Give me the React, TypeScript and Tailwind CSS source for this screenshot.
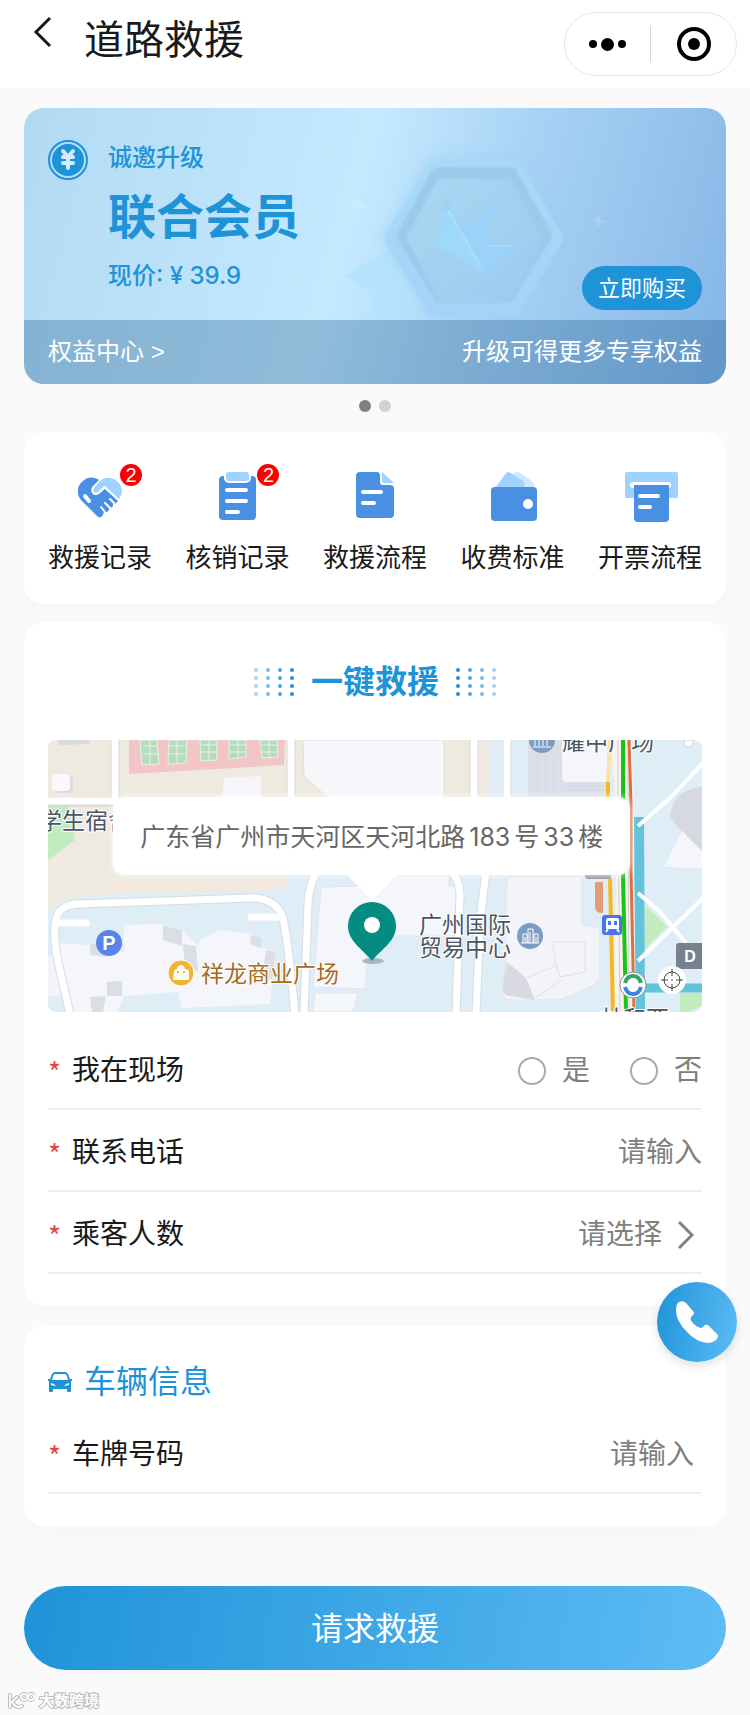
import React, { useState } from 'react';

const shortcuts = [
  { key: 'rescue', label: '救援记录', badge: 2 },
  { key: 'verify', label: '核销记录', badge: 2 },
  { key: 'process', label: '救援流程', badge: 0 },
  { key: 'fee', label: '收费标准', badge: 0 },
  { key: 'invoice', label: '开票流程', badge: 0 },
];

const ShortcutIcon: React.FC<{ name: string }> = ({ name }) => {
  return (
    <svg viewBox="0 0 64 56" className="h-14 w-16" fill="none" strokeLinecap="round" aria-hidden="true">
      {name === 'rescue' && (
        <>
          <path
            d="M13 32C8 26 9 17 15 13C20 8 27 9 31 12L25 18C22 21 23 27 28 27C31 27 34 23 37 21L50 33L48 35C47 36 46 36 45 35L45 38C44 40 42 40 41 39L41 42C39 45 37 45 36 43L35 47C33 50 31 50 29 48Z"
            fill="#4a90e2"
          />
          <path
            d="M32 13C38 8 45 9 50 14C55 19 55 26 51 31L39 20C38 18 36 18 35 19L30 24C27 26 24 23 26 20Z"
            fill="#9fd2ff"
          />
          <path d="M17 28L21 33" stroke="#fff" strokeWidth="4" />
          <path d="M42 31L46 35M37 35L42 40M33 39L37 44" stroke="#fff" strokeWidth="2" />
        </>
      )}
      {name === 'verify' && (
        <>
          <rect x="14" y="8" width="37" height="44" rx="4" fill="#4a90e2" />
          <rect x="20" y="3" width="25" height="11" rx="4" fill="#9fd2ff" stroke="#fff" strokeWidth="2" />
          <path d="M22 22H41M22 33H41M22 44H33" stroke="#fff" strokeWidth="4" />
        </>
      )}
      {name === 'process' && (
        <>
          <path d="M17 4H34Q37 4 37 8V14Q37 17 40 17H47Q51 17 51 21V46Q51 50 47 50H17Q13 50 13 46V8Q13 4 17 4Z" fill="#4a90e2" />
          <path d="M39 4L51 15H41Q39 15 39 13Z" fill="#9fd2ff" />
          <path d="M20 24H38M20 35H31" stroke="#fff" strokeWidth="4" />
        </>
      )}
      {name === 'fee' && (
        <>
          <path d="M30 8L36 4Q38 3 40 5L52 13Q54 15 54 19H40Z" fill="#cfe8ff" />
          <path d="M16 19L26 5Q28 3 31 5L43 13Q45 15 44 19Z" fill="#9fd2ff" />
          <rect x="11" y="19" width="46" height="34" rx="4" fill="#4a90e2" />
          <circle cx="48" cy="36" r="5" fill="#fff" />
        </>
      )}
      {name === 'invoice' && (
        <>
          <rect x="7" y="4" width="53" height="26" rx="2" fill="#9fd2ff" />
          <rect x="12" y="14" width="41" height="6" rx="3" fill="#fff" />
          <path d="M16 17H51V50Q51 54 47 54H20Q16 54 16 50Z" fill="#4a90e2" />
          <path d="M22 28H40M22 39H32" stroke="#fff" strokeWidth="4" />
        </>
      )}
    </svg>
  );
};

// faded medal and crown behind the membership text
const BannerArt = () => (
  <svg viewBox="0 0 702 276" preserveAspectRatio="xMidYMid slice" className="absolute inset-0 h-full w-full" aria-hidden="true">
    <defs>
      <linearGradient id="hexOuter" x1="0" y1="0" x2="0" y2="1">
        <stop offset="0" stopColor="#a8daf6" />
        <stop offset="1" stopColor="#a3d3fa" />
      </linearGradient>
      <linearGradient id="hexInner" x1="0" y1="0" x2="1" y2="1">
        <stop offset="0" stopColor="#a8d8f1" />
        <stop offset="1" stopColor="#9ccaf0" />
      </linearGradient>
      <linearGradient id="star" x1="0" y1="0" x2="1" y2="1">
        <stop offset="0" stopColor="#b2e0fd" />
        <stop offset="1" stopColor="#b4e4fc" stopOpacity="0.3" />
      </linearGradient>
      <filter id="soft" x="-20%" y="-20%" width="140%" height="140%">
        <feGaussianBlur stdDeviation="6" />
      </filter>
      <filter id="edge" x="-10%" y="-10%" width="120%" height="120%">
        <feGaussianBlur stdDeviation="1" />
      </filter>
    </defs>
    <path d="M321 167L352 150L368 138L400 196L346 214L350 186Z" fill="url(#star)" filter="url(#edge)" />
    <path d="M334 88L337 95L344 99L337 101L334 107L331 100L325 96L331 95Z" fill="#cbecff" opacity="0.6" />
    <path d="M575 106L577 112L583 113L577 115L574 120L573 115L568 112L573 111Z" fill="#b3d3f4" opacity="0.6" />
    <g strokeLinejoin="round">
      <path d="M412 60H488L530 130L488 200H412L370 130Z" stroke="#93cff5" strokeWidth="22" fill="#93cff5" filter="url(#soft)" opacity="0.4" />
      <path d="M412 62H488L529 130L488 198H412L371 130Z" fill="url(#hexOuter)" stroke="url(#hexOuter)" strokeWidth="20" filter="url(#edge)" />
      <path d="M415 68H485L519 128L483 185H417L382 128Z" fill="#9bcbec" stroke="#9bcbec" strokeWidth="18" filter="url(#edge)" />
      <path d="M417 77H483L511 130L480 189H420L389 130Z" fill="url(#hexInner)" stroke="url(#hexInner)" strokeWidth="12" filter="url(#edge)" />
    </g>
    <g fill="#9ad2fa">
      <path d="M422 100L448 144L461 166L414 138Z" fill="#9dd9f9" />
      <path d="M436 124L465 102L462 138L490 141L461 166L448 144Z" />
      <path d="M424 102L456 157" stroke="#abdefc" strokeWidth="2" />
      <path d="M462 138H490" stroke="#a7d8fa" strokeWidth="2" />
      <circle cx="422" cy="98" r="5" />
      <circle cx="465" cy="101" r="5" />
      <circle cx="492" cy="137" r="4" />
    </g>
  </svg>
);

const DotGrid: React.FC<{ flip?: boolean }> = ({ flip }) => {
  const shades = ['#a9d3ef', '#7cbce7', '#4fa6de', '#1f93d8'];
  const cols = flip ? [...shades].reverse() : shades;
  return (
    <svg viewBox="0 0 42 30" className="h-[30px] w-[42px]" aria-hidden="true">
      {cols.map((fill, c) =>
        [0, 1, 2, 3].map((r) => <circle key={`${c}-${r}`} cx={3 + c * 12} cy={3 + r * 8} r="2" fill={fill} />)
      )}
    </svg>
  );
};

const MapDrawing = () => (
  <svg
    viewBox="0 0 654 272"
    preserveAspectRatio="xMidYMid slice"
    className="absolute inset-0 h-full w-full font-['Liberation_Sans','Noto_Sans_CJK_SC',sans-serif]"
    aria-hidden="true"
  >
    <rect width="654" height="272" fill="#dfedf6" />
    {/* campus */}
    <path d="M0 0H441V57H239V147L210 152L60 154L15 160L0 172Z" fill="#eeeae0" />
    <path d="M60 140H239V147L60 153Z" fill="#f3e9e0" />
    <path d="M0 65H20L27 100L0 120Z" fill="#c1ecbd" />
    <path d="M81 0H237L236 25L81 34Z" fill="#f2c6c8" />
    <g fill="#b5dcbb" stroke="#e7f3e3" strokeWidth="1">
      <path d="M92 0H109L111 24L94 25Z" />
      <path d="M121 0H139L138 23L120 24Z" />
      <path d="M152 0H169L169 20L153 21Z" />
      <path d="M181 0H198L198 17L181 19Z" />
      <path d="M212 0H229L230 17L214 18Z" />
    </g>
    <path d="M94 6H110M94 14H110M102 0V24M121 6H138M121 14H138M129 0V23M153 5H169M153 12H169M161 0V20M181 5H198M181 12H198M190 0V18M213 5H230M213 12H230M221 0V17" stroke="#e7f3e3" />
    <path d="M9 0H41V4L12 5Z" fill="#dadbdc" />
    <rect x="6" y="36" width="19" height="17" rx="4" fill="#dcdcdf" />
    <rect x="4" y="34" width="18" height="17" rx="4" fill="#f9f9fc" />
    <path d="M176 38L213 36V58H174Z" fill="#f6f6fa" />
    <path d="M255 0H396V58H280L256 36Z" fill="#f7f7fb" stroke="#e0e0e4" />
    <path d="M67 0V58M0 62H68M243 0V58M426 0V58" stroke="#d9d8d4" strokeWidth="9" />
    <path d="M67 0V60M0 61H68M243 0V58M426 0V58" stroke="#fff" strokeWidth="7" />
    {/* buildings, lower left */}
    <path d="M10 203L42 205V212H76V185L115 184L134 190L150 206L152 200L170 190L205 194L213 207L228 212L222 264L134 268L130 252L76 256L70 272H20Z" fill="#f5f6fb" />
    <path d="M115 185L134 190V206L115 200Z M135 204L148 206L150 232L137 226Z M203 195L213 198V208L202 204Z M218 210L228 212L224 240L214 236Z M43 203L57 207V217L42 215Z M59 242L74 241V256H59Z M42 257L58 256L55 272H44Z" fill="#dcdee6" />
    <path d="M0 217L12 217V256H0Z" fill="#f3f4f9" />
    {/* buildings, centre */}
    <path d="M273 147L318 146V136H401V146H408V196H318V240L317 249L265 247Z" fill="#f5f6fb" stroke="#e3e5ec" />
    <path d="M267 253H310L305 272H265Z" fill="#f5f6fb" stroke="#e3e5ec" />
    <path d="M480 0H562V57H480Z" fill="#dcdfe8" />
    <path d="M490 10V52M498 14V54M506 16V54M516 46H556M520 50H556" stroke="#d2d5df" />
    <path d="M514 0H563V38Q563 42 559 42H518Q514 42 514 38Z" fill="#f5f6fb" />
    <path d="M462 137H534V184L552 188V238L545 246L512 260H462Q454 260 455 250L458 218V150Q458 140 462 137Z" fill="#f3f4fa" stroke="#e0e2ea" />
    <path d="M459 222L478 238L487 260L462 256Q455 256 455 248Z" fill="#d9dae1" />
    <path d="M478 238L510 225M487 258L514 240M504 202H537V232L512 237L508 225Z" stroke="#dfe1e9" fill="none" />
    {/* side roads */}
    <g fill="none" stroke="#d7dde4" strokeWidth="9">
      <path d="M22 274L10 222Q4 190 9 176Q13 165 30 164L203 158Q228 158 235 178Q240 200 247 274" />
      <path d="M268 132Q260 150 260 165L256 274M404 132Q412 142 412 155L408 274M438 132L432 180L428 274M459 0V58" />
    </g>
    <g fill="none" stroke="#fff" strokeWidth="7" strokeLinecap="round">
      <path d="M22 274L10 222Q4 190 9 176Q13 165 30 164L203 158Q228 158 235 178Q240 200 247 274" />
      <path d="M9 183H38M203 177H234" />
      <path d="M268 132Q260 150 260 165L256 274M404 132Q412 142 412 155L408 274M438 132L432 180L428 274M459 0V58" />
    </g>
    {/* right block */}
    <path d="M622 77Q624 58 638 51L654 46V113L634 92Z" fill="#d6d8e2" />
    <path d="M616 127L634 91L654 111V128Z" fill="#f5f6fb" />
    <path d="M597 165L619 187L597 209Z" fill="#c1ecbd" />
    <path d="M632 253H654V266L640 272H632Z" fill="#c1ecbd" />
    <path d="M636 0H645V5Q640 9 636 4Z" fill="#fff" stroke="#cdd5dc" />
    <path d="M586 77H596L597 272H587Z" fill="#63c3da" />
    <path d="M596 248H654" stroke="#63c3da" strokeWidth="9" />
    <path d="M590 86L622 58L656 22M590 153L612 172L638 203M590 221L622 190L656 157" fill="none" stroke="#fff" strokeWidth="4" />
    {/* arterial road with traffic colours */}
    <path d="M562 0L568 60V136L566 272H588L586 136V60L583 0Z" fill="#f6f4ec" />
    <path d="M562 0L560 42" stroke="#f6e3b0" strokeWidth="4" />
    <path d="M570 0V60L572 272M580 0V60L581 272" stroke="#cfd0ca" fill="none" />
    <path d="M560 42V58M562 138L565 272" stroke="#f6b820" strokeWidth="4" />
    <path d="M575 0V60L575 136L578 272" stroke="#1cc21c" strokeWidth="4" fill="none" />
    <path d="M581 0L583 64V130L586 272" stroke="#dd6f42" strokeWidth="3" fill="none" />
    <path d="M547 142H555V173Q547 173 547 167Z" fill="#e39b78" />
    <rect x="537" y="130" width="26" height="9" rx="3" fill="#8e979f" />
    {/* markers */}
    <circle cx="61" cy="203" r="13" fill="#5883ea" />
    <text x="61" y="210" textAnchor="middle" fontSize="20" fontWeight="700" fill="#fff">P</text>
    <circle cx="133" cy="233" r="13" fill="#f4b32e" stroke="#fff" />
    <path d="M126 232Q126 229 129 229Q130 225 133 225Q136 225 137 229Q141 229 141 232V240H125Z" fill="#fff" />
    <path d="M130 231V233M136 231V233" stroke="#f4b32e" strokeWidth="2" />
    <g>
      <circle cx="482" cy="196" r="13" fill="#7c9dc1" />
      <path d="M475 203V194H479V203M480 203V189H485V203M486 203V194H490V203M473 203H491" stroke="#fff" strokeWidth="1" fill="none" />
      <path d="M477 197V203M482 192V203M488 197V203" stroke="#fff" />
      <circle cx="494" cy="0" r="13" fill="#7c9dc1" />
      <path d="M487 6V0M491 6V0M495 6V0M499 6V0M485 7H503" stroke="#fff" />
    </g>
    <rect x="554" y="175" width="20" height="20" rx="3" fill="#4676ea" />
    <path d="M560 178H569Q571 178 571 181V189H558V181Q558 178 560 178Z" fill="#fff" />
    <path d="M560 181H563V185H560ZM566 181H569V185H566Z" fill="#4676ea" />
    <path d="M560 189L558 192M569 189L571 192" stroke="#fff" strokeWidth="2" />
    <circle cx="585" cy="245" r="13" fill="#fff" stroke="#8b959c" />
    <path d="M577 243Q579 236 585 236Q591 236 593 243" stroke="#32a861" strokeWidth="4" fill="none" />
    <path d="M577 247Q579 254 585 254Q591 254 593 247" stroke="#3a86dc" strokeWidth="4" fill="none" />
    <rect x="628" y="203" width="28" height="26" rx="3" fill="#77818f" />
    <text x="642" y="222" textAnchor="middle" fontSize="16" fontWeight="700" fill="#fff">D</text>
    {/* place names */}
    <g fontSize="23" fill="#4b5563" stroke="#fff" strokeWidth="2" paintOrder="stroke">
      <text x="-9" y="89">学生宿舍</text>
      <text x="514" y="10">耀中广场</text>
      <text x="371" y="193">广州国际</text>
      <text x="371" y="216">贸易中心</text>
      <text x="552" y="287">林和西</text>
      <text x="153" y="242" fill="#a56c1d">祥龙商业广场</text>
    </g>
    {/* pin */}
    <path d="M298 134H350L324 160Z" fill="#fff" />
    <ellipse cx="325" cy="221" rx="11" ry="3" fill="#7f96a0" opacity="0.6" />
    <path d="M324 221C316 210 300 202 300 186A24 24 0 0 1 348 186C348 202 332 210 324 221Z" fill="#048b82" />
    <circle cx="324" cy="185" r="8" fill="#fff" />
  </svg>
);

const FormRow: React.FC<{ label: string; htmlFor?: string; children: React.ReactNode }> = ({ label, htmlFor, children }) => (
  <div className="flex h-[82px] items-center justify-between border-b-2 border-[#f0f0f0] pt-[6px]">
    <label htmlFor={htmlFor} className="flex shrink-0 items-center text-[28px] leading-10 text-[#1a1a1a]">
      <span className="w-6 font-['Noto_Sans_CJK_SC',sans-serif] text-[#e64545]">*</span>
      {label}
    </label>
    {children}
  </div>
);

export default function App() {
  const [onSite, setOnSite] = useState('');
  const [phone, setPhone] = useState('');
  const [passengers, setPassengers] = useState('');
  const [plate, setPlate] = useState('');

  return (
    <div className="min-h-screen bg-[#fafafa] font-['Liberation_Sans','Noto_Sans_CJK_SC',sans-serif] text-[#1a1a1a]">
      <header className="flex items-start bg-white py-3 pr-[13px] pl-8">
        <button type="button" aria-label="返回" className="flex h-10 w-8 items-center">
          <svg viewBox="0 0 20 32" className="h-8 w-5" fill="none" stroke="#1a1a1a" strokeWidth="3">
            <path d="M18 2L4 16L18 30" />
          </svg>
        </button>
        <h1 className="ml-5 text-[40px] leading-14">道路救援</h1>
        <div className="ml-auto flex h-16 w-[173px] items-center rounded-full border border-[#e6e6e6]">
          <button type="button" aria-label="更多" className="flex flex-1 items-center justify-center gap-1">
            <span className="h-2 w-2 rounded-full bg-black" />
            <span className="h-[13px] w-[13px] rounded-full bg-black" />
            <span className="h-2 w-2 rounded-full bg-black" />
          </button>
          <span className="h-9 w-px bg-[#d4d4d4]" />
          <button type="button" aria-label="关闭" className="flex flex-1 items-center justify-center">
            <span className="flex h-[34px] w-[34px] items-center justify-center rounded-full border-4 border-black">
              <span className="h-3 w-3 rounded-full bg-black" />
            </span>
          </button>
        </div>
      </header>

      <main className="px-6 pt-5">
        <section className="relative overflow-hidden rounded-[20px] bg-[linear-gradient(105deg,#b1daf2_0%,#c5e9ff_46%,#a9d3f5_66%,#84b5e6_100%)]">
          <BannerArt />
          <div className="relative flex items-start px-6 pt-8 pb-[10px] text-[#1f93d8]">
            <svg viewBox="0 0 40 40" className="h-10 w-10" aria-hidden="true">
              <circle cx="20" cy="20" r="19" fill="none" stroke="#1f93d8" strokeWidth="2" />
              <circle cx="20" cy="20" r="16" fill="#1f93d8" />
              <path d="M15 11L20 17L25 11M20 17V28M15 17H25M15 23H25" fill="none" stroke="#d3edfb" strokeWidth="4" strokeLinecap="round" />
            </svg>
            <div className="ml-5 pb-4 font-medium">
              <p className="text-2xl leading-9">诚邀升级</p>
              <p className="mt-[14px] text-5xl leading-14 font-bold">联合会员</p>
              <p className="mt-3 font-['Inter','Noto_Sans_CJK_SC',sans-serif] text-2xl leading-9">现价: ¥ 39.9</p>
            </div>
            <button type="button" className="ml-auto h-11 w-[120px] self-end rounded-full bg-[#1f93d8] text-[22px] text-white">
              立即购买
            </button>
          </div>
          <div className="relative flex h-16 items-center justify-between bg-[rgba(24,83,132,0.3)] px-6 text-2xl text-white">
            <a href="#benefits">权益中心 &gt;</a>
            <span>升级可得更多专享权益</span>
          </div>
        </section>

        <div className="flex justify-center gap-2 py-4">
          <span className="h-3 w-3 rounded-full bg-[#808080]" />
          <span className="h-3 w-3 rounded-full bg-[#d2d2d2]" />
        </div>

        <nav className="mt-1 flex justify-between rounded-[20px] bg-white px-6 pt-9 pb-7 shadow-[0_8px_24px_rgba(0,0,0,0.02)]">
          {shortcuts.map((item) => (
            <button key={item.key} type="button" className="flex flex-col items-center">
              <span className="relative">
                <ShortcutIcon name={item.key} />
                {item.badge > 0 && (
                  <span className="absolute -top-1 -right-[10px] h-[22px] w-[22px] rounded-full bg-[#fe0000] text-center text-xl leading-[22px] text-white">
                    {item.badge}
                  </span>
                )}
              </span>
              <span className="mt-4 text-[26px] leading-9">{item.label}</span>
            </button>
          ))}
        </nav>

        <section className="mt-[18px] rounded-[20px] bg-white px-6 pt-[34px] pb-8 shadow-[0_8px_24px_rgba(0,0,0,0.02)]">
          <div className="flex items-center justify-center gap-4">
            <DotGrid />
            <h2 className="text-[32px] leading-[52px] font-bold text-[#1f93d8]">一键救援</h2>
            <DotGrid flip />
          </div>

          <div className="relative mt-8 h-[272px] overflow-hidden rounded-lg">
            <MapDrawing />
            <div className="absolute top-[57px] right-[11%] left-[10%] flex h-[78px] items-center justify-center rounded-xl bg-white pt-1 font-['Inter','Noto_Sans_CJK_SC',sans-serif] text-[25px] whitespace-nowrap text-[#666] shadow-[0_0_6px_rgba(255,255,255,0.9)]">
              广东省广州市天河区天河北路<span className="mx-1">183</span>号<span className="mx-1">33</span>楼
            </div>
            <button
              type="button"
              aria-label="重新定位"
              className="absolute right-4 bottom-[18px] flex h-7 w-7 items-center justify-center rounded-full bg-white"
            >
              <svg viewBox="0 0 22 22" className="h-[22px] w-[22px]" fill="none" stroke="#444" strokeWidth="1">
                <circle cx="11" cy="11" r="8" />
                <path d="M11 0V7M11 15V22M0 11H7M15 11H22M10 11H12" />
              </svg>
            </button>
          </div>

          <div className="mt-4">
            <FormRow label="我在现场">
              <div role="radiogroup" aria-label="我在现场" className="flex gap-10 text-[28px] leading-10 text-[#808080]">
                {['是', '否'].map((option) => (
                  <label key={option} className="flex items-center gap-4">
                    <input
                      type="radio"
                      name="onSite"
                      value={option}
                      checked={onSite === option}
                      onChange={(e) => setOnSite(e.target.value)}
                      className="h-7 w-7 appearance-none rounded-full border-2 border-[#aaa] checked:border-8 checked:border-[#1f93d8]"
                    />
                    {option}
                  </label>
                ))}
              </div>
            </FormRow>
            <FormRow label="联系电话" htmlFor="phone">
              <input
                id="phone"
                type="tel"
                value={phone}
                onChange={(e) => setPhone(e.target.value)}
                placeholder="请输入"
                className="min-w-0 flex-1 text-right text-[28px] leading-10 placeholder:text-[#808080] focus:outline-none"
              />
            </FormRow>
            <FormRow label="乘客人数" htmlFor="passengers">
              <div className="flex items-center gap-4 pr-2 text-[#808080]">
                <select
                  id="passengers"
                  value={passengers}
                  onChange={(e) => setPassengers(e.target.value)}
                  className="[field-sizing:content] appearance-none text-right text-[28px] leading-10 focus:outline-none"
                >
                  <option value="">请选择</option>
                  <option value="1">1人</option>
                  <option value="2">2人</option>
                  <option value="3">3人</option>
                  <option value="4">4人</option>
                </select>
                <svg viewBox="0 0 16 28" className="h-7 w-4" fill="none" stroke="#808080" strokeWidth="3" aria-hidden="true">
                  <path d="M1 1L14 14L1 27" />
                </svg>
              </div>
            </FormRow>
          </div>
        </section>

        <section className="mt-5 rounded-[20px] bg-white px-6 pt-8 pb-8 shadow-[0_8px_24px_rgba(0,0,0,0.02)]">
          <h2 className="flex items-center gap-3 text-[32px] leading-12 text-[#1f93d8]">
            <svg viewBox="0 0 24 20" className="h-5 w-6" fill="#1f93d8" aria-hidden="true">
              <path
                fillRule="evenodd"
                d="M7 0H17Q19 0 20 2L22 7L24 7V9H23V19Q23 20 22 20H20Q19 20 19 19V17H5V19Q5 20 4 20H2Q1 20 1 19V9H0V7L2 7L4 2Q5 0 7 0ZM7 2Q6 2 5 4L4 8H20L19 4Q18 2 17 2ZM3 11V13L8 14L6 12ZM21 11V13L16 14L18 12Z"
              />
            </svg>
            车辆信息
          </h2>
          <div className="mt-[6px]">
            <FormRow label="车牌号码" htmlFor="plate">
              <input
                id="plate"
                type="text"
                value={plate}
                onChange={(e) => setPlate(e.target.value)}
                placeholder="请输入"
                className="min-w-0 flex-1 pr-2 text-right text-[28px] leading-10 placeholder:text-[#808080] focus:outline-none"
              />
            </FormRow>
          </div>
        </section>

        <button
          type="button"
          className="mt-[60px] h-[84px] w-full rounded-full bg-[linear-gradient(100deg,#1f93d8_0%,#5dbcf5_100%)] pt-[2px] text-[32px] text-white"
        >
          请求救援
        </button>
      </main>

      <footer className="flex h-[45px] items-center gap-1 pt-4 pl-2">
        <svg viewBox="0 0 27 20" className="h-5 w-[27px]" fill="none" strokeLinecap="round" aria-hidden="true">
          <g stroke="#bcbcbc" strokeWidth="4">
            <path d="M2 4V16M9 6L4 11Q8 18 14 15" />
            <circle cx="16" cy="6" r="3" />
            <circle cx="23" cy="6" r="3" />
          </g>
          <g stroke="#fafafa" strokeWidth="2">
            <path d="M2 4V16M9 6L4 11Q8 18 14 15" />
            <circle cx="16" cy="6" r="3" />
            <circle cx="23" cy="6" r="3" />
          </g>
        </svg>
        <span className="text-[15px] leading-5 font-bold text-white [paint-order:stroke] [-webkit-text-stroke:2px_#bcbcbc]">大数跨境</span>
      </footer>

      <a
        href="tel:"
        aria-label="拨打电话"
        className="fixed right-[13px] bottom-[353px] flex h-20 w-20 items-center justify-center rounded-full bg-[linear-gradient(100deg,#1f93d8_0%,#5dbcf5_100%)] shadow-[0_4px_10px_rgba(0,0,0,0.12)]"
      >
        <svg viewBox="0 0 42 42" className="h-[42px] w-[42px]" fill="#fff" aria-hidden="true">
          <path d="M3 1Q7 -1 10 2L17 10Q19 12 17 14L15 16Q14 18 16 21Q20 26 25 27L27 26L29 24Q31 23 33 25L41 33Q43 35 41 38Q37 42 32 42Q20 41 11 31Q0 20 0 9Q0 3 3 1Z" />
        </svg>
      </a>
    </div>
  );
}
